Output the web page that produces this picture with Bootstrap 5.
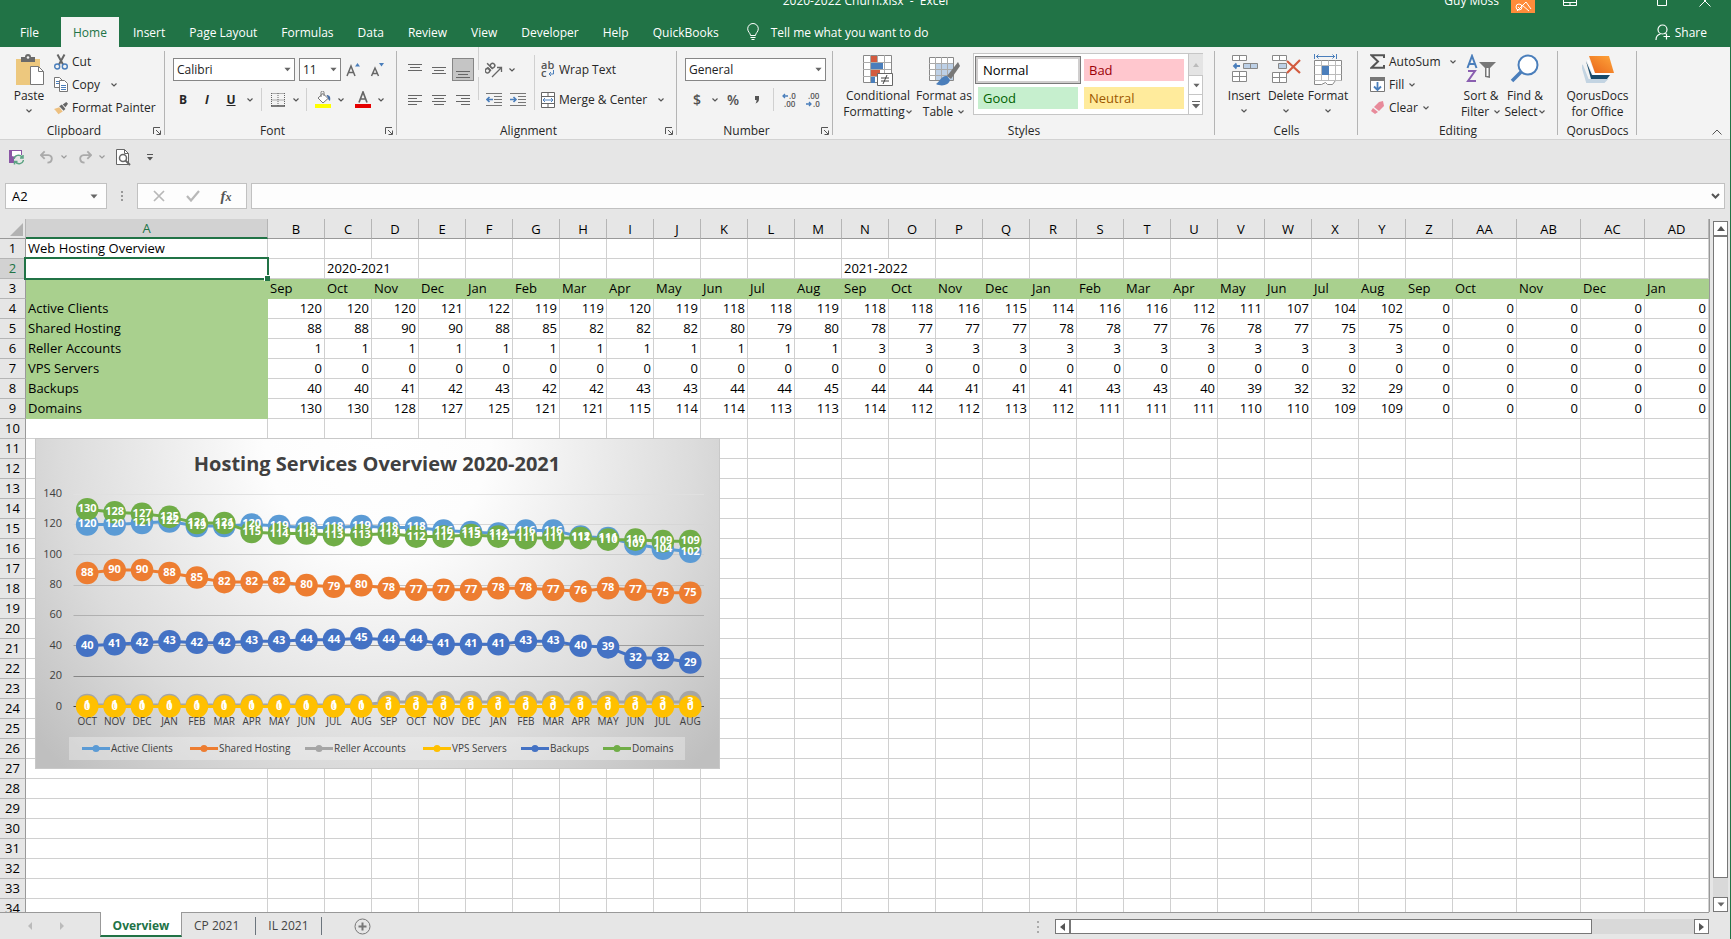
<!DOCTYPE html>
<html lang="en">
<head>
<meta charset="utf-8">
<meta name="viewport" content="width=device-width, initial-scale=1">
<title>2020-2022 Churn.xlsx - Excel</title>
<link href="https://cdn.jsdelivr.net/npm/bootstrap@5.3.0/dist/css/bootstrap.min.css" rel="stylesheet">
<style>
:root{--xl:#217346;--ink:#262626;--ic:#6a6a6a;--blue:#4a7ebb;--edge:#ababab}
body{font-family:"Open Sans","Noto Sans",sans-serif;font-size:12px;line-height:16px;color:var(--ink);background:#e6e6e6}
.window-frame{height:100vh;overflow:hidden}
button{border:0;background:none;padding:0;color:inherit;font:inherit}
svg{display:block;flex:none}
.titlebar{background:var(--xl);height:17px;overflow:hidden;color:#fff}
.titlebar-in{height:32px;margin-top:-15px;position:relative}
.avatar{width:24px;height:24px;background:#ff8c3a}
.title-text{white-space:pre}
.tabs{background:var(--xl);height:30px;color:#fff}
.tabs a{color:#fff;text-decoration:none;padding:0 12px;height:30px;line-height:31px;white-space:nowrap}
.tabs a.first-tab{padding:0 22px 0 20px}
.tabs a.active{background:#f3f3f3;color:var(--xl);margin-right:2px}
.framed{border-right:1px solid var(--xl)}
.ribbon{background:#f3f3f3;height:93px;border-bottom:1px solid #d2d2d2}
.grp{position:relative;flex:none}
.grp::after{content:"";position:absolute;right:0;top:4px;bottom:4px;width:1px;background:#b4b4b4}
.grp-body{height:75px}
.grp-label{height:17px;line-height:18px}
.launch{width:17px;display:flex;align-items:center;justify-content:center}
.g-clip{width:165px}.g-font{width:232px}.g-align{width:280px}.g-num{width:156px}
.g-style{width:382px}.g-cells{width:143px}.g-edit{width:200px}.g-qorus{width:79px}
.big{display:flex;flex-direction:column;align-items:center;padding-top:7px;white-space:nowrap}
.big svg.pic{height:32px;width:32px;margin-bottom:2px}
.big .dn{height:14px}
.stack{padding-top:3px}
.line{height:23px;display:flex;align-items:center;white-space:nowrap}
.line svg.pic{margin-right:4px}
.two{display:grid;grid-template-rows:23px 23px;row-gap:7px;padding-top:11px}
.lead-in{padding-left:6px}
.sep-col{padding:0 3px}
.sep-wide{padding:8px 6px 12px 4px}
.ib{width:24px;height:23px;display:flex;align-items:center;justify-content:center}
.ib.on{width:22px;margin:0 1px;background:#c5c5c5;border:1px solid #868686}
.cv{width:12px;height:23px;display:flex;align-items:center;justify-content:center;flex:none}
.cv.wide{width:14px}
.vsep{width:1px;background:#d0d0d0;align-self:stretch;flex:none}
.combo{position:relative;height:23px}
.combo select{appearance:none;display:block;width:100%;height:23px;border:1px solid #868686;border-radius:0;background:#fff;padding:0 0 0 3px;color:#222;font:inherit;line-height:18px}
.combo svg{position:absolute;right:4px;top:9px;pointer-events:none}
.glyph{font-size:14px;font-weight:600;color:#505050}
.gallery{width:230px;height:62px;background:#fff;border:1px solid #c6c6c6;margin-top:6px;display:grid;grid-template-columns:1fr 15px}
.swatches{display:grid;grid-template-columns:106px 106px;grid-template-rows:28px 28px;padding:2px 1px;font-size:13px}
.swatches button{text-align:left;padding-left:5px;margin:3px;line-height:20px}
.swatches .normal{margin:0;border:1px solid #7a7a7a;outline:2px solid #d0cece;outline-offset:-3px;color:#000;padding-left:7px}
.bad{background:#ffc7ce;color:#9c0006}.good{background:#c6efce;color:#006100}.neutral{background:#ffeb9c;color:#9c5700}
.gal-scroll{display:grid;grid-template-rows:21px 19px 20px;border-left:1px solid #c6c6c6}
.gal-scroll button{display:flex;align-items:center;justify-content:center}
.gal-scroll button+button{border-top:1px solid #c6c6c6}
.gal-scroll .off{background:#e4e4e4}
.qat{height:43px;padding:4px 0 0 8px;flex:none}
.qat-row{height:26px}
.fbar{height:36px;padding:0 5px 10px 5px;flex:none}
.fbox{background:#fdfdfd;border:1px solid #c1c1c1}
.fbox input{border:0;background:none;font:inherit;font-size:13px;padding:0 6px;outline:0;min-width:0}
.name-box{width:102px}.fx-box{width:110px}
.fx-glyph{font:italic 600 15px "Liberation Serif",serif;color:#555}
.fx-glyph small{font-size:12px}
.sheet{min-height:0}
.cells{overflow:hidden;position:relative;background:#fff;border-right:1px solid #999}
.cells table{table-layout:fixed;border-collapse:separate;border-spacing:0;width:1709px;font-size:13px;color:#000}
.cells th,.cells td{height:20px;line-height:19px;padding:0 2px;border-right:1px solid #d0d0d0;border-bottom:1px solid #d0d0d0;white-space:nowrap;overflow:hidden;font-weight:400}
.cells td.num{text-align:right}
.cells thead th{background:#e6e6e6;text-align:center;border-bottom:1px solid #999;border-right-color:#b5b5b5;line-height:17px;padding-top:1px}
.cells tbody th{background:#e6e6e6;text-align:center;border-right:1px solid #999;border-bottom-color:#b5b5b5;padding:0}
.cells thead th.sel{background:#d2d2d2;color:var(--xl);border-bottom:2px solid var(--xl)}
.cells tbody th.sel{background:#d2d2d2;color:var(--xl)}
.cells td.fill{background:#a9d08e;border-color:#a9d08e}
.cells td.cur{position:relative;overflow:visible}
.cells td.cur::before{content:"";position:absolute;inset:-2px;border:2px solid var(--xl)}
.cells td.cur::after{content:"";position:absolute;right:-3px;bottom:-3px;width:6px;height:6px;background:var(--xl);border:1px solid #fff;border-width:1px 0 0 1px}
.chart-box{position:absolute;left:35px;top:219px;width:685px;height:331px;border:1px solid #c8c8c8;background:radial-gradient(ellipse 450px 460px at 50% 0,#fff 0,#fdfdfd 25%,#dcdcdc 70%,#bfbfbf 100%)}
.chart-box text{fill:#404040;font-size:10px}
.chart-box .ttl{font-size:20px;font-weight:700}
.chart-box .axis{font-size:11px}
.chart-box .month{font-size:10px}
.chart-box .val{fill:#fff;font-size:11px;font-weight:700}
.vscroll{width:15px;margin:2px 2px 0 3px;background:#d9d9d9}
.vscroll button,.hscroll button{width:15px;height:15px;border:1px solid #777;background:#fff;display:flex;align-items:center;justify-content:center;flex:none}
.vthumb{height:642px;flex:0 1 auto;background:#fff;border:1px solid #777}
.sheetbar{height:27px;flex:none}
.sheetbar .rule{border-top:1px solid #999}
.stab{color:#444;text-decoration:none;font-size:12px;line-height:26px;white-space:nowrap}
.stab.active{width:82px;height:25px;line-height:27px;background:#fff;color:var(--xl);font-weight:700;text-align:center;border:1px solid #999;border-width:0 1px;border-bottom:2px solid var(--xl)}
.hwrap{width:654px;margin-right:21px;padding-top:6px}
.hscroll{height:15px;background:#d9d9d9}
.hthumb{width:522px;background:#fff;border:1px solid #777}
</style>
</head>
<body>
<svg width="0" height="0" class="position-absolute" aria-hidden="true">
<symbol id="dn" viewBox="0 0 8 8"><path d="M1.500 2.500L4 5l2.500-2.500" fill="none" stroke="#555" stroke-width="1.200"/></symbol>
<symbol id="tri" viewBox="0 0 8 5"><path d="M.5.5h7L4 4.500z" fill="#666"/></symbol>
<symbol id="lau" viewBox="0 0 8 8"><path d="M.5 7V.5H7M3 3l4 4M7.500 3.500v4h-4" fill="none" stroke="#555"/></symbol>
</svg>
<div class="window-frame d-flex flex-column">
<header>
  <div class="titlebar"><div class="titlebar-in d-flex align-items-center">
    <div class="title-text flex-grow-1 text-center">2020-2022 Churn.xlsx  -  Excel</div>
    <div class="position-absolute end-0 d-flex align-items-center pe-3">
      <span class="me-2 pe-1">Guy Moss</span>
      <span class="avatar me-4 d-flex align-items-end justify-content-center"><svg width="20" height="14" viewBox="0 0 20 14" fill="none" stroke="#fff"><circle cx="6" cy="8" r="3"/><path d="M4 12l9-9 5 7M9 6l7 6M5 8l3 3"/></svg></span>
      <svg class="me-5 ms-1" width="14" height="10" viewBox="0 0 14 10" fill="none" stroke="#fff"><path d="M.5 1h13v8.500H.5zM.5 6.500h13M7 6.500v3"/></svg>
      <span class="ms-4 ps-2 me-4 pe-2"><svg width="10" height="10" viewBox="0 0 10 10" fill="none" stroke="#fff"><path d="M.5.5h9v9h-9z"/></svg></span>
      <svg class="me-1" width="12" height="12" viewBox="0 0 12 12" fill="none" stroke="#fff"><path d="M.5.5l11 11M11.500.5l-11 11"/></svg>
    </div>
  </div></div>
  <nav class="tabs d-flex align-items-center">
    <a class="first-tab" href="#">File</a><a class="active" href="#">Home</a><a href="#">Insert</a><a href="#">Page Layout</a><a href="#">Formulas</a><a href="#">Data</a><a href="#">Review</a><a href="#">View</a><a href="#">Developer</a><a href="#">Help</a><a href="#">QuickBooks</a>
    <svg class="ms-3" width="12" height="18" viewBox="0 0 12 18" fill="none" stroke="#fff"><path d="M3.500 12.500c0-2.500-2.800-3.500-2.800-6.700a5.300 5.300 0 0 1 10.600 0c0 3.200-2.800 4.200-2.800 6.700zM3.500 14.500h5M4.500 16.500h3"/></svg>
    <a href="#">Tell me what you want to do</a>
    <a class="ms-auto d-flex align-items-center gap-1 pe-4" href="#"><svg width="16" height="17" viewBox="0 0 16 17" fill="none" stroke="#fff" stroke-width="1.200"><circle cx="7.500" cy="5.500" r="4.500"/><path d="M1 16c0-3.500 2-5.500 4.500-6M9.500 9l1 1M11.500 9.500v6M8.500 12.500h6.500"/></svg>Share</a>
  </nav>
</header>

<div class="framed d-flex flex-column flex-grow-1 sheet">
<section class="ribbon d-flex flex-none" aria-label="Home ribbon">
  <div class="grp g-clip">
    <div class="grp-body d-flex ps-2">
      <button class="big me-1" style="width:42px"><svg class="pic" viewBox="0 0 32 32"><path d="M3 5h24v26H3z" fill="#edc87e"/><path d="M8 3h4a3 3 0 0 1 6 0h4v5H8z" fill="#6a6a6a"/><circle cx="15" cy="3.500" r="1.300" fill="#f3f3f3"/><path d="M17.500 12.500h8l5 5v13h-13z" fill="#fff" stroke="#777"/><path d="M25.500 12.500v5h5" fill="none" stroke="#777"/></svg><span>Paste</span><span class="dn"><svg width="8" height="14"><use href="#dn"/></svg></span></button>
      <div class="stack">
        <button class="line"><svg class="pic" width="14" height="16" viewBox="0 0 14 16" fill="none"><path d="M3.500.5l5.500 10M10.500.5L5 10.500" stroke="#666" stroke-width="2"/><circle cx="3.200" cy="12.500" r="2.500" stroke="#4a7ebb" stroke-width="1.400"/><circle cx="10.800" cy="12.500" r="2.500" stroke="#4a7ebb" stroke-width="1.400"/></svg>Cut</button>
        <div class="line"><button class="line"><svg class="pic" width="14" height="15" viewBox="0 0 14 15"><g fill="#fff" stroke="#777"><path d="M.5.5h5l3 3v7h-8z"/><path d="M5.500 3.500h5l3 3v8h-8z"/></g><path d="M2 4.500h3M2 6.500h3M7 8.500h5M7 10.500h5M7 12.500h5" stroke="#4a7ebb"/></svg>Copy</button><button class="cv ms-2" aria-label="Copy options"><svg width="8" height="8"><use href="#dn"/></svg></button></div>
        <button class="line"><svg class="pic" width="14" height="14" viewBox="0 0 16 14"><path d="M0 8l6-2 4 5-5 3c-1-2-3-4-5-6z" fill="#edc080"/><path d="M6 5l3-2 4 5-2 2zM10 3l4-3 2 2-3 4z" fill="#666"/></svg>Format Painter</button>
      </div>
    </div>
    <div class="grp-label d-flex"><span class="flex-grow-1 text-center">Clipboard</span><button class="launch" aria-label="Clipboard settings"><svg width="8" height="8"><use href="#lau"/></svg></button></div>
  </div>

  <div class="grp g-font">
    <div class="grp-body two">
      <div class="d-flex ps-2">
        <div class="combo me-1" style="width:122px"><select aria-label="Font"><option>Calibri</option></select><svg width="7" height="5"><use href="#tri"/></svg></div>
        <div class="combo" style="width:42px"><select aria-label="Font size"><option>11</option></select><svg width="7" height="5"><use href="#tri"/></svg></div>
        <button class="ib" aria-label="Grow font"><svg width="14" height="16" viewBox="0 0 14 16"><path d="M1 14L5 4l4 10M2.500 10.500h5" fill="none" stroke="#666" stroke-width="1.500"/><path d="M9 4.500h5L11.500 1z" fill="#4a7ebb"/></svg></button>
        <button class="ib" aria-label="Shrink font"><svg width="14" height="16" viewBox="0 0 14 16"><path d="M1.500 14L5 6l3.500 8M3 11.500h4" fill="none" stroke="#666" stroke-width="1.500"/><path d="M9 1h5l-2.500 3.500z" fill="#4a7ebb"/></svg></button>
      </div>
      <div class="d-flex lead-in">
        <button class="ib fw-bold" aria-label="Bold">B</button><button class="ib fw-bold fst-italic" aria-label="Italic">I</button><button class="ib fw-bold text-decoration-underline" aria-label="Underline">U</button><button class="cv wide" aria-label="Underline options"><svg width="8" height="8"><use href="#dn"/></svg></button>
        <span class="vsep mx-1"></span>
        <button class="ib" aria-label="Borders"><svg width="14" height="14" viewBox="0 0 14 14"><path d="M.5.5h13M.5 7h13M.5 0v13M7 0v13M13.500 0v13" stroke="#666" stroke-dasharray="1 1" fill="none"/><path d="M0 13h14" stroke="#555" stroke-width="1.500"/></svg></button><button class="cv" aria-label="Border options"><svg width="8" height="8"><use href="#dn"/></svg></button>
        <span class="vsep mx-1"></span>
        <button class="ib" aria-label="Fill colour"><svg width="16" height="17" viewBox="0 0 16 17"><path d="M3 7l5-4.500 5 5-5 4.500z" fill="#fff" stroke="#777"/><path d="M6 6V1.500a1.500 1.500 0 0 1 3 0V5" fill="none" stroke="#777"/><path d="M11.500 4c3 0 4.500 2 3.500 6-1.500-1-2-2-2-3z" fill="#4a6fa5"/><path d="M0 13h16v4H0z" fill="#ff0"/></svg></button><button class="cv" aria-label="Fill options"><svg width="8" height="8"><use href="#dn"/></svg></button>
        <button class="ib ms-1" aria-label="Font colour"><svg width="16" height="17" viewBox="0 0 16 17"><path d="M4 11.500L8 1l4 10.500M5.500 8h5" fill="none" stroke="#666" stroke-width="1.700"/><path d="M0 13h16v4H0z" fill="#e60000"/></svg></button><button class="cv" aria-label="Font colour options"><svg width="8" height="8"><use href="#dn"/></svg></button>
      </div>
    </div>
    <div class="grp-label d-flex"><span class="flex-grow-1 text-center">Font</span><button class="launch" aria-label="Font settings"><svg width="8" height="8"><use href="#lau"/></svg></button></div>
  </div>

  <div class="grp g-align">
    <div class="grp-body d-flex lead-in">
      <div class="two">
        <div class="d-flex"><button class="ib" aria-label="Top align"><svg width="14" height="16" stroke="#666"><path d="M0 2.500h14M2 5.500h10M0 8.500h14"/></svg></button><button class="ib" aria-label="Middle align"><svg width="14" height="16" stroke="#666"><path d="M0 5.500h14M2 8.500h10M0 11.500h14"/></svg></button><button class="ib on" aria-label="Bottom align"><svg width="14" height="16" stroke="#666"><path d="M0 9.500h14M2 12.500h10M0 15.500h14"/></svg></button></div>
        <div class="d-flex"><button class="ib" aria-label="Align left"><svg width="14" height="12" stroke="#666"><path d="M0 1.500h14M0 4.500h9M0 7.500h14M0 10.500h9"/></svg></button><button class="ib" aria-label="Centre"><svg width="14" height="12" stroke="#666"><path d="M0 1.500h14M2 4.500h10M0 7.500h14M2 10.500h10"/></svg></button><button class="ib" aria-label="Align right"><svg width="14" height="12" stroke="#666"><path d="M0 1.500h14M5 4.500h9M0 7.500h14M5 10.500h9"/></svg></button></div>
      </div>
      <div class="two sep-col"><span class="vsep"></span><span class="vsep"></span></div>
      <div class="two">
        <div class="d-flex"><button class="ib" aria-label="Orientation"><svg width="18" height="16" viewBox="0 0 18 16"><g transform="rotate(-45 6 8)" fill="none" stroke="#666" stroke-width="1.500"><circle cx="3" cy="6" r="2.200"/><path d="M5.500 3.500v5M8 .5v8"/><circle cx="10.200" cy="6" r="2.200"/></g><path d="M7 15l9-9M12 5.500h4.500V10" fill="none" stroke="#666" stroke-width="1.300"/></svg></button><button class="cv" aria-label="Orientation options"><svg width="8" height="8"><use href="#dn"/></svg></button></div>
        <div class="d-flex"><button class="ib" aria-label="Decrease indent"><svg width="16" height="14" fill="none"><path d="M0 .5h16M8 3.500h8M8 6.500h8M8 9.500h8M0 12.500h16" stroke="#777"/><path d="M7 6.500H1M3.500 4L1 6.500 3.500 9" stroke="#4a7ebb" stroke-width="1.600"/></svg></button><button class="ib" aria-label="Increase indent"><svg width="16" height="14" fill="none"><path d="M0 .5h16M8 3.500h8M8 6.500h8M8 9.500h8M0 12.500h16" stroke="#777"/><path d="M0 6.500h6M3.500 4L6 6.500 3.500 9" stroke="#4a7ebb" stroke-width="1.600"/></svg></button></div>
      </div>
      <div class="sep-wide d-flex"><span class="vsep"></span></div>
      <div class="two">
        <button class="line"><svg class="pic" width="14" height="17" viewBox="0 0 14 17"><text x="0" y="8" font-size="11" font-weight="600" fill="#555">ab</text><text x="0" y="16" font-size="11" font-weight="600" fill="#555">c</text><path d="M12.500 9v4H8M10 11l-2 2 2 2" fill="none" stroke="#4a7ebb"/></svg>Wrap Text</button>
        <div class="line"><button class="line"><svg class="pic" width="14" height="16" viewBox="0 0 14 16" fill="#fff" stroke="#666"><path d="M.5.5h13v15H.5zM.5 4.500h13M.5 11.500h13M7 .5v4M7 11.500v4"/><path d="M2 8h10M4 6L2 8l2 2M10 6l2 2-2 2" stroke="#4a7ebb" fill="none"/></svg>Merge &amp; Center</button><button class="cv ms-2" aria-label="Merge options"><svg width="8" height="8"><use href="#dn"/></svg></button></div>
      </div>
    </div>
    <div class="grp-label d-flex"><span class="flex-grow-1 text-center">Alignment</span><button class="launch" aria-label="Alignment settings"><svg width="8" height="8"><use href="#lau"/></svg></button></div>
  </div>

  <div class="grp g-num">
    <div class="grp-body two px-2">
      <div class="combo"><select aria-label="Number format"><option>General</option></select><svg width="7" height="5"><use href="#tri"/></svg></div>
      <div class="d-flex">
        <button class="ib glyph" aria-label="Currency">$</button><button class="cv" aria-label="Currency options"><svg width="8" height="8"><use href="#dn"/></svg></button>
        <button class="ib glyph" aria-label="Percent">%</button><button class="ib glyph" aria-label="Comma style"><svg width="6" height="9"><path d="M1 1h4v3c0 2-1 4-3.500 4.500C2.500 7 2.500 6 2.500 5H1z" fill="#555"/></svg></button>
        <span class="vsep mx-1"></span>
        <button class="ib" aria-label="Increase decimal"><svg width="16" height="16" viewBox="0 0 16 16" font-size="8" font-weight="600" fill="#555"><text x="7" y="7">.0</text><text x="2" y="15">.00</text><path d="M6 4H1M3 2L1 4l2 2" stroke="#4a7ebb" stroke-width="1.300" fill="none"/></svg></button>
        <button class="ib" aria-label="Decrease decimal"><svg width="16" height="16" viewBox="0 0 16 16" font-size="8" font-weight="600" fill="#555"><text x="2" y="7">.00</text><text x="7" y="15">.0</text><path d="M0 12h5M3 10l2 2-2 2" stroke="#4a7ebb" stroke-width="1.300" fill="none"/></svg></button>
      </div>
    </div>
    <div class="grp-label d-flex"><span class="flex-grow-1 text-center">Number</span><button class="launch" aria-label="Number settings"><svg width="8" height="8"><use href="#lau"/></svg></button></div>
  </div>

  <div class="grp g-style">
    <div class="grp-body d-flex ps-2">
      <button class="big" style="width:74px"><svg class="pic" viewBox="0 0 32 32"><path d="M1.500 1.500h28v27h-28z" fill="#fff" stroke="#888"/><path d="M8.500 1v27M22.500 1v27M15.500 1v27M1 8.500h28M1 15.500h28M1 22.500h28" stroke="#aaa"/><path d="M9 2h6v6H9zM9 16h9v6H9z" fill="#d35b3f"/><path d="M9 9h12v6H9zM9 23h4v6H9z" fill="#4a7ebb"/><path d="M15.500 19.500h15v12h-15z" fill="#fff" stroke="#666"/><path d="M19 24h8M19 27h8M25 21l-4 9" stroke="#444"/></svg><span>Conditional</span><span class="d-flex align-items-center">Formatting<svg width="8" height="8"><use href="#dn"/></svg></span></button>
      <button class="big" style="width:58px"><svg class="pic" viewBox="0 0 32 32"><path d="M1.500 3.500h24v23h-24z" fill="#fff" stroke="#888"/><path d="M8 10h17v16H8z" fill="#bdd0e6"/><path d="M7.500 3v23M13.500 3v23M19.500 3v23M1 9.500h24M1 15.500h24M1 21.500h24" stroke="#aaa"/><path d="M30 8l2 4-9 13-4-3z" fill="#777"/><path d="M19 22c-5-1-7 5-11 8 6 3 13 1 14-4z" fill="#4a7ebb"/></svg><span>Format as</span><span class="d-flex align-items-center gap-1">Table <svg width="8" height="8"><use href="#dn"/></svg></span></button>
      <div class="gallery">
        <div class="swatches"><button class="normal">Normal</button><button class="bad">Bad</button><button class="good">Good</button><button class="neutral">Neutral</button></div>
        <div class="gal-scroll"><button class="off" aria-label="Scroll up"><svg width="6" height="4"><path d="M0 4h6L3 0z" fill="#bbb"/></svg></button><button aria-label="Scroll down"><svg width="7" height="5"><use href="#tri"/></svg></button><button aria-label="More styles"><svg width="8" height="8" viewBox="0 0 8 8"><path d="M0 .5h8" stroke="#666"/><path d="M0 3h8L4 7.500z" fill="#666"/></svg></button></div>
      </div>
    </div>
    <div class="grp-label text-center">Styles</div>
  </div>

  <div class="grp g-cells">
    <div class="grp-body d-flex ps-2">
      <button class="big" style="width:42px"><svg class="pic" viewBox="0 0 32 32" fill="#fff" stroke="#888"><path d="M4.500 1.500h14v5h-14zM11.500 1.500v5M4.500 17.500h14v10h-14zM4.500 22.500h14M11.500 17.500v10"/><path d="M15.500 9.500h14v5h-14zM22.500 9.500v5" fill="#bdd0e6"/><path d="M12 12H6M8.500 9.500L6 12l2.500 2.500" stroke="#4a7ebb" stroke-width="1.800" fill="none"/></svg><span>Insert</span><svg class="dn" width="8"><use href="#dn"/></svg></button>
      <button class="big" style="width:42px"><svg class="pic" viewBox="0 0 32 32" fill="#fff" stroke="#888"><path d="M2.500 1.500h14v5h-14zM9.500 1.500v5M2.500 18.500h14v10h-14zM2.500 23.500h14M9.500 18.500v10"/><path d="M8.500 9.500h8v5h-8z" fill="#bdd0e6"/><path d="M17 7l13 12M30 6L17 19" stroke="#d35b3f" stroke-width="2.200"/></svg><span>Delete</span><svg class="dn" width="8"><use href="#dn"/></svg></button>
      <button class="big" style="width:42px"><svg class="pic" viewBox="0 0 32 32" fill="#fff" stroke="#888"><path d="M2.500 6.500h27v20l-6 0-3 4h-5l-2-2-4 2h-7z"/><path d="M9.500 6.500v20M16.500 6.500v20M23.500 6.500v20M2.500 11.500h27M2.500 20.500h27M2.500 26.500h27" stroke="#bbb"/><path d="M10 12h7v9h-7z" fill="#4a7ebb" stroke="none"/><path d="M2.500 0v5M24.500 0v5M4 2.500h19M6.500.5l-2 2 2 2M20.500.5l2 2-2 2" stroke="#4a7ebb" fill="none"/></svg><span>Format</span><svg class="dn" width="8"><use href="#dn"/></svg></button>
    </div>
    <div class="grp-label text-center">Cells</div>
  </div>

  <div class="grp g-edit">
    <div class="grp-body d-flex ps-2">
      <div class="stack ps-1" style="width:93px">
        <div class="line"><button class="line"><svg class="pic" width="15" height="15" viewBox="0 0 15 15"><path d="M14 4V1.200H1.500L8 7.500l-6.500 6.300H14V11" fill="none" stroke="#555" stroke-width="2"/></svg>AutoSum</button><button class="cv ms-auto" aria-label="AutoSum options"><svg width="8" height="8"><use href="#dn"/></svg></button></div>
        <button class="line"><svg class="pic" width="15" height="15" viewBox="0 0 15 15"><path d="M.5.5h14v14H.5z" fill="#fff" stroke="#777"/><path d="M0 0h15v4H0z" fill="#777"/><path d="M7.500 5v8M4 9.500L7.500 13 11 9.500" fill="none" stroke="#4a7ebb" stroke-width="1.800"/></svg>Fill<svg class="ms-1" width="8" height="8"><use href="#dn"/></svg></button>
        <button class="line"><svg class="pic" width="15" height="14" viewBox="0 0 15 14"><path d="M9 1l4-1 1 5-5 5-5-4z" fill="#e88a9a"/><path d="M3 7l5 4-3 2-4-3z" fill="#e88a9a"/></svg>Clear<svg class="ms-1" width="8" height="8"><use href="#dn"/></svg></button>
      </div>
      <button class="big" style="width:44px"><svg class="pic" viewBox="0 0 32 32" fill="none"><path d="M2.500 14L7 2l4.500 12M4 10h6" stroke="#4a7ebb" stroke-width="2"/><path d="M3 17h7L3 27h8" stroke="#8a5fb0" stroke-width="2"/><path d="M14 8h17l-6 6v10l-5-1v-9z" fill="#777"/><path d="M22.500 14v8" stroke="#fff" stroke-width="2"/></svg><span>Sort &amp;</span><span class="d-flex align-items-center">Filter<svg class="ms-1" width="8" height="8"><use href="#dn"/></svg></span></button>
      <button class="big" style="width:44px"><svg class="pic" viewBox="0 0 32 32"><circle cx="19" cy="11" r="9.500" fill="#fff" stroke="#4a7ebb" stroke-width="2"/><path d="M12 18L3 27" stroke="#4a7ebb" stroke-width="3.500"/></svg><span>Find &amp;</span><span class="d-flex align-items-center">Select<svg width="8" height="8"><use href="#dn"/></svg></span></button>
    </div>
    <div class="grp-label text-center">Editing</div>
  </div>

  <div class="grp g-qorus">
    <div class="grp-body d-flex justify-content-center">
      <button class="big"><svg class="pic" viewBox="0 0 32 32"><path d="M0 11l6 15h18l-2 2H5z" fill="#c3d4e2" stroke="#c3d4e2" stroke-width="2"/><path d="M4 7l6 14h18l-3 4H9z" fill="#174a6b"/><path d="M6 6l6 14h16" fill="none" stroke="#fff" stroke-width="2"/><path d="M7 2h20l5 17H13z" fill="url(#qg)"/><defs><linearGradient id="qg" x1="1" x2="0" y2="1"><stop stop-color="#ffa63a"/><stop offset="1" stop-color="#e8641b"/></linearGradient></defs></svg><span>QorusDocs</span><span>for Office</span></button>
    </div>
    <div class="grp-label text-center">QorusDocs</div>
  </div>
  <button class="ms-auto align-self-end pe-2 pb-1" aria-label="Collapse ribbon"><svg width="10" height="6" fill="none" stroke="#555"><path d="M.5 5.500L5 1l4.500 4.500"/></svg></button>
</section>

<div class="qat"><div class="qat-row d-flex align-items-center">
  <button aria-label="Save"><svg width="16" height="16" viewBox="0 0 16 16"><path d="M1 1h13v5h-1.500V2.500h-8v5H8L6 10v4H1z" fill="#8a56a5"/><path d="M4 2h9v5H4z" fill="#fff"/><path d="M6 10a4.500 4.500 0 0 1 8-2M15 6v3h-3M15.500 11a4.500 4.500 0 0 1-8 2M6.500 15.500v-3h3" fill="none" stroke="#5ba382" stroke-width="1.500"/></svg></button>
  <button class="ms-3 ps-0" aria-label="Undo"><svg width="14" height="14" viewBox="0 0 15 14" fill="none" stroke="#aaa" stroke-width="2"><path d="M5 1L1 5l4 4M1.500 5H9c5 0 5 8-1 8"/></svg></button><button class="cv ms-1" aria-label="Undo list"><svg width="8" height="8" opacity=".5"><use href="#dn"/></svg></button>
  <button class="ms-2" aria-label="Redo"><svg width="14" height="14" viewBox="0 0 15 14" fill="none" stroke="#aaa" stroke-width="2"><path d="M10 1l4 4-4 4M13.500 5H6c-5 0-5 8 1 8"/></svg></button><button class="cv ms-1" aria-label="Redo list"><svg width="8" height="8" opacity=".5"><use href="#dn"/></svg></button>
  <button class="ms-2" aria-label="Print preview"><svg width="15" height="17" viewBox="0 0 15 17"><path d="M.5.5h8l4 4v11H.5z" fill="#fff" stroke="#666"/><path d="M8.500.5v4h4" fill="none" stroke="#666"/><circle cx="7" cy="9" r="3.500" fill="#fff" stroke="#666" stroke-width="1.500"/><path d="M9.500 11.500L14 16" stroke="#666" stroke-width="2"/></svg></button>
  <button class="ms-3" aria-label="Customize toolbar"><svg width="6" height="7"><path d="M0 .5h6" stroke="#555"/><path d="M0 3h6L3 6.500z" fill="#555"/></svg></button>
</div></div>

<div class="fbar d-flex">
  <div class="fbox name-box d-flex align-items-center pe-1"><input class="flex-grow-1 w-100" aria-label="Name box" value="A2"><button class="pe-1" aria-label="Names"><svg width="8" height="5"><use href="#tri"/></svg></button></div>
  <svg class="align-self-center" width="30" height="13" viewBox="0 0 30 13" fill="#999"><path d="M14 1h2v2h-2zM14 5h2v2h-2zM14 9h2v2h-2z"/></svg>
  <div class="fbox fx-box d-flex align-items-center justify-content-around me-1 px-1">
    <button aria-label="Cancel"><svg width="12" height="12" stroke="#b8b8b8" stroke-width="1.700"><path d="M1 1l10 10M11 1L1 11"/></svg></button>
    <button aria-label="Enter"><svg width="14" height="12" fill="none" stroke="#b8b8b8" stroke-width="2.200"><path d="M1 6l4 4.500L13 1"/></svg></button>
    <button class="fx-glyph" aria-label="Insert function">f<small>x</small></button>
  </div>
  <div class="fbox flex-grow-1 d-flex align-items-center pe-1"><input class="flex-grow-1" aria-label="Formula"><button aria-label="Expand formula bar"><svg width="9" height="8" fill="none" stroke="#555" stroke-width="2"><path d="M1 2l3.500 3.500L8 2"/></svg></button></div>
</div>

<main class="d-flex flex-grow-1 sheet">
  <div class="cells flex-grow-1">
    <table><colgroup id="cols"></colgroup><thead><tr id="letters"></tr></thead><tbody id="rows"></tbody></table>
    <div class="chart-box"><svg id="chart" width="683" height="329" viewBox="36 439 683 329" role="img" aria-label="Hosting Services Overview 2020-2021"></svg></div>
  </div>
  <div class="vscroll d-flex flex-column">
    <button aria-label="Scroll up"><svg width="8" height="5"><path d="M0 5h8L4 0z" fill="#555"/></svg></button><div class="vthumb"></div>
    <button class="mt-auto" aria-label="Scroll down"><svg width="8" height="5"><use href="#tri"/></svg></button>
  </div>
</main>

<footer class="sheetbar d-flex">
  <div class="rule d-flex align-items-center ps-4" style="width:100px"><button class="ms-1 me-4 pe-1" aria-label="Previous sheet"><svg width="4" height="8"><path d="M4 0v8L0 4z" fill="#bbb"/></svg></button><button aria-label="Next sheet"><svg width="4" height="8"><path d="M0 0v8l4-4z" fill="#bbb"/></svg></button></div>
  <a class="stab active" href="#">Overview</a>
  <div class="rule flex-grow-1 d-flex">
    <a class="stab px-2 ms-1" href="#">CP 2021</a><span class="vsep my-1 ms-2 me-1 bg-secondary"></span><a class="stab px-2" href="#">IL 2021</a><span class="vsep my-1 ms-1 bg-secondary"></span>
    <button class="ms-4 ps-2" aria-label="New sheet"><svg width="17" height="17" fill="none" stroke="#777"><circle cx="8.500" cy="8.500" r="7.500"/><path d="M8.500 4.500v8M4.500 8.500h8" stroke-width="2"/></svg></button>
    <svg class="ms-auto me-3 mt-2" width="2" height="12" fill="#aaa"><path d="M0 0h2v2H0zM0 5h2v2H0zM0 10h2v2H0z"/></svg>
  </div>
  <div class="hwrap rule"><div class="hscroll d-flex"><button aria-label="Scroll left"><svg width="5" height="8"><path d="M5 0v8L0 4z" fill="#555"/></svg></button><div class="hthumb"></div><button class="ms-auto" aria-label="Scroll right"><svg width="5" height="8"><path d="M0 0v8l5-4z" fill="#555"/></svg></button></div></div>
</footer>
</div>
</div>

<script src="https://cdn.jsdelivr.net/npm/bootstrap@5.3.0/dist/js/bootstrap.bundle.min.js"></script>
<script>
const months = ['Sep','Oct','Nov','Dec','Jan','Feb','Mar','Apr','May','Jun','Jul','Aug'];
const series = [
  ['Active Clients','#5b9bd5',[120,120,120,121,122,119,119,120,119,118,118,119,118,118,116,115,114,116,116,112,111,107,104,102]],
  ['Shared Hosting','#ed7d31',[88,88,90,90,88,85,82,82,82,80,79,80,78,77,77,77,78,78,77,76,78,77,75,75]],
  ['Reller Accounts','#a5a5a5',[...Array(12).fill(1),...Array(12).fill(3)]],
  ['VPS Servers','#ffc000',Array(24).fill(0)],
  ['Backups','#4472c4',[40,40,41,42,43,42,42,43,43,44,44,45,44,44,41,41,41,43,43,40,39,32,32,29]],
  ['Domains','#70ad47',[130,130,128,127,125,121,121,115,114,114,113,113,114,112,112,113,112,111,111,111,110,110,109,109]]
];
const COLS = 30;
const letter = i => i < 26 ? String.fromCharCode(65 + i) : 'A' + String.fromCharCode(39 + i);
const colWidth = i => i === 0 ? 242 : i === 1 ? 57 : i < 26 ? 47 : 64;
let cols = '<col style="width:26px">', head = '<th><svg class="ms-auto" width="13" height="13"><path d="M13 0v13H0z" fill="#b2b2b2"/></svg></th>';
for (let i = 0; i < COLS; i++) {
  cols += `<col style="width:${colWidth(i)}px">`;
  head += `<th${i ? '' : ' class="sel"'}>${letter(i)}</th>`;
}
document.getElementById('cols').innerHTML = cols;
document.getElementById('letters').innerHTML = head;

let body = '';
for (let r = 1; r <= 36; r++) {
  body += `<tr><th${r === 2 ? ' class="sel"' : ''}>${r}</th>`;
  for (let c = 0; c < COLS; c++) {
    if (r === 1 && c === 0) body += '<td>Web Hosting Overview</td>';
    else if (r === 2 && c === 0) body += '<td class="cur"></td>';
    else if (r === 2 && (c === 2 || c === 13)) { body += `<td colspan="2">${c === 2 ? '2020-2021' : '2021-2022'}</td>`; c++; }
    else if (r === 3) body += `<td class="fill">${c ? months[(c - 1) % 12] : ''}</td>`;
    else if (r > 3 && r < 10) {
      const s = series[r - 4];
      body += c ? `<td class="num">${s[2][c - 1] ?? 0}</td>` : `<td class="fill">${s[0]}</td>`;
    } else body += '<td></td>';
  }
  body += '</tr>';
}
document.getElementById('rows').innerHTML = body;

const left = 73.5, right = 704, zero = 706.5, unit = 1.517, step = (right - left) / 23;
const px = i => left + step * (i + .5), py = v => zero - v * unit;
let g = '<text class="ttl" x="377" y="471" text-anchor="middle">Hosting Services Overview 2020-2021</text>';
for (let v = 0; v <= 140; v += 20) {
  const shade = ['#404040','#868686','#9c9c9c','#b0b0b0','#bfbfbf','#cccccc','#d6d6d6','#e0e0e0'][v / 20];
  g += `<path d="M${left} ${Math.floor(py(v)) + .5}H${right}" stroke="${shade}"/><text class="axis" x="62" y="${py(v) + 3}" text-anchor="end">${v}</text>`;
}
let labels = '';
for (const [name, colour, all] of series) {
  const data = all.slice(1);
  g += `<polyline fill="none" stroke="${colour}" stroke-width="3" points="${data.map((v, i) => px(i) + ',' + py(v)).join(' ')}"/>`;
  data.forEach((v, i) => {
    g += `<circle cx="${px(i)}" cy="${py(v)}" r="11.300" fill="${colour}"/>`;
    labels += `<text class="val" x="${px(i)}" y="${py(v) + 3}" text-anchor="middle">${v}</text>`;
  });
}
for (let i = 0; i < 23; i++) g += `<text class="month" x="${px(i)}" y="725" text-anchor="middle">${months[(i + 1) % 12].toUpperCase()}</text>`;
g += labels + '<rect x="69" y="737" width="616" height="23" fill="#f2f2f2" opacity=".4"/>';
[82,190,305,423,521,603].forEach((x, i) => {
  g += `<path d="M${x} 748.500h28" stroke="${series[i][1]}" stroke-width="3"/><circle cx="${x + 14}" cy="748.500" r="3.500" fill="${series[i][1]}"/><text x="${x + 29}" y="752">${series[i][0]}</text>`;
});
document.getElementById('chart').innerHTML = g;
</script>
</body>
</html>
